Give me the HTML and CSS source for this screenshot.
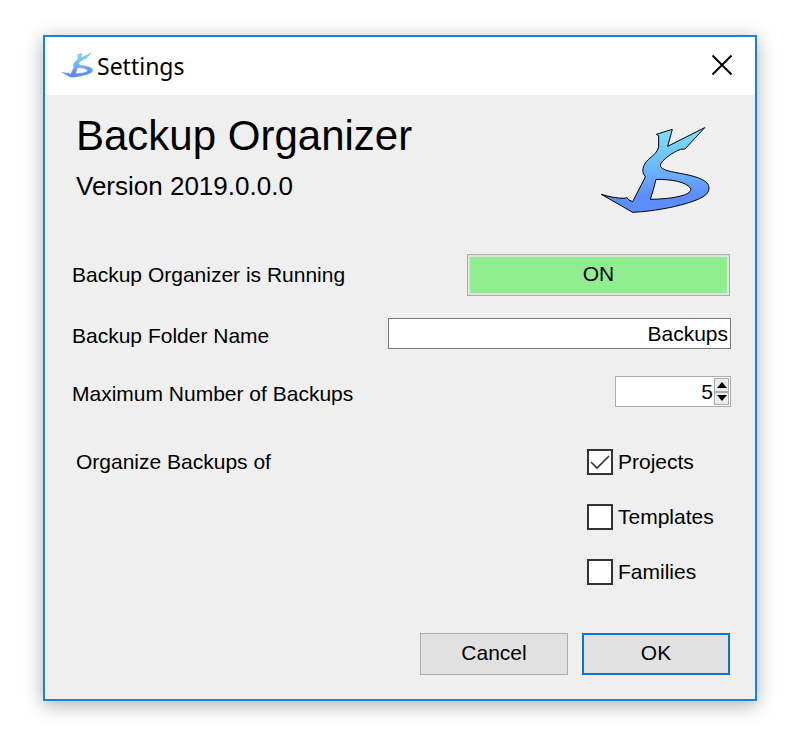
FILE: index.html
```html
<!DOCTYPE html>
<html lang="en">
<head>
<meta charset="utf-8">
<title>Settings</title>
<meta name="viewport" content="width=device-width, initial-scale=1">
<link rel="stylesheet" href="styles.css">
</head>
<body>
<svg class="defs" aria-hidden="true">
  <defs>
    <linearGradient id="logo-fill" x1="0" y1="0" x2="0" y2="1">
      <stop offset="0" stop-color="#7ce4fc"/>
      <stop offset="0.5" stop-color="#6bb4fb"/>
      <stop offset="0.8" stop-color="#5c8efb"/>
      <stop offset="1" stop-color="#5d8cff"/>
    </linearGradient>
    <symbol id="logo" viewBox="30 34 330 262">
      <path fill="url(#logo-fill)" fill-rule="evenodd" stroke-linejoin="round" d="M34 238 L128 292 C190 289 250 277 290 265 C332 252 357 240 357 220 C357 195 320 184 265 174 C235 169 211 163 211 150 C214 136 250 110 272 103 L285 102 L344 38 L233 94 L247 43 L199 58 L206 62 L206 96 C203 110 190 122 180 129 C165 142 157 155 159 172 C160 180 166 181 166 186 L128 260 L117 255 L110 247 L105 250 C80 250 55 245 34 238 Z M198 193 C193 213 188 234 181 253 C240 252 303 243 303 222 C290 200 245 193 198 193 Z"/>
    </symbol>
  </defs>
</svg>
<form class="dialog" role="dialog" aria-labelledby="dialog-title">
  <header class="titlebar">
    <svg class="app-icon" aria-hidden="true"><use href="#logo"/></svg>
    <span class="titlebar-text" id="dialog-title">Settings</span>
    <button class="close" type="button" aria-label="Close">
      <svg viewBox="0 0 20 20" aria-hidden="true"><path d="M0.5 0.5 L19.5 19.5 M19.5 0.5 L0.5 19.5"/></svg>
    </button>
  </header>
  <main class="content">
    <section class="about">
      <div class="about-text">
        <h1>Backup Organizer</h1>
        <p>Version 2019.0.0.0</p>
      </div>
      <svg class="logo" aria-hidden="true"><use href="#logo"/></svg>
    </section>
    <div class="row">
      <label for="running">Backup Organizer is Running</label>
      <button class="button toggle" id="running" type="button">ON</button>
    </div>
    <div class="row row-field row-folder">
      <label for="folder">Backup Folder Name</label>
      <input class="field" id="folder" type="text" value="Backups">
    </div>
    <div class="row row-field row-max">
      <label for="maximum">Maximum Number of Backups</label>
      <div class="spinner">
        <input id="maximum" type="text" inputmode="numeric" value="5">
        <div class="steps">
          <button type="button" aria-label="Increase"><svg viewBox="0 0 10 6" aria-hidden="true"><path d="M5 0 L10 6 H0 Z"/></svg></button>
          <button type="button" aria-label="Decrease"><svg viewBox="0 0 10 6" aria-hidden="true"><path d="M0 0 H10 L5 6 Z"/></svg></button>
        </div>
      </div>
    </div>
    <fieldset class="kinds">
      <legend>Organize Backups of</legend>
      <div class="choices">
        <label><input type="checkbox" checked>Projects</label>
        <label><input type="checkbox">Templates</label>
        <label><input type="checkbox">Families</label>
      </div>
    </fieldset>
    <footer class="actions">
      <button class="button" type="button">Cancel</button>
      <button class="button primary" type="submit">OK</button>
    </footer>
  </main>
</form>
</body>
</html>
```
FILE: styles.css
```css
* {
  box-sizing: border-box;
}

body {
  margin: 0;
  padding: 35px 47px 46px 43px;
  background: #fff;
  color: #000;
  font: 21px/26px "Liberation Sans", Arial, sans-serif;
}

button,
input {
  font: inherit;
  color: inherit;
}

.defs {
  position: absolute;
  width: 0;
  height: 0;
}

.dialog {
  border: 2px solid #1883d7;
  background: #efefef;
  box-shadow: 0 4px 18px rgba(0, 0, 0, 0.32);
}

.titlebar {
  display: flex;
  align-items: center;
  height: 58px;
  padding: 0 23px 2px 16px;
  background: #fff;
}

.app-icon {
  width: 32px;
  height: 26px;
  stroke: #7c9cc4;
  stroke-width: 4;
}

.titlebar-text {
  flex: 1;
  margin-left: 4px;
  padding-top: 2px;
  font: 23px/32px "Noto Sans", "Open Sans", sans-serif;
}

.close {
  display: flex;
  padding: 0;
  border: 0;
  background: none;
}

.close svg {
  width: 20px;
  height: 20px;
  overflow: visible;
  fill: none;
  stroke: #000;
  stroke-width: 2;
}

.content {
  padding: 16px 25px 24px 27px;
}

.about {
  display: flex;
  justify-content: space-between;
  padding: 0 20px 0 4px;
  margin-bottom: 40px;
}

h1 {
  margin: 0;
  font-size: 42px;
  font-weight: 400;
  line-height: 50px;
}

.about p {
  margin: 9px 0 0;
  font-size: 26px;
  line-height: 32px;
}

.logo {
  width: 110px;
  height: 88px;
  margin-top: 15px;
  stroke: #000;
  stroke-width: 3;
}

.row {
  display: flex;
  align-items: center;
  justify-content: space-between;
}

.row-field {
  align-items: flex-end;
  margin-right: -1px;
}

.row-folder {
  margin-top: 22px;
}

.row-max {
  margin-top: 27px;
}

.button {
  width: 148px;
  height: 42px;
  padding: 0 0 2px;
  border: 1px solid #adadad;
  border-radius: 0;
  background: #e1e1e1;
}

.toggle {
  width: 40%;
  background: #90ee90;
  box-shadow: inset 0 0 0 2px #e1e1e1;
}

.primary {
  border: 2px solid #0078d7;
}

.field {
  width: 52%;
  height: 31px;
  padding: 0 2px;
  border: 1px solid #7a7a7a;
  border-radius: 0;
  background: #fff;
  text-align: right;
}

.spinner {
  display: flex;
  width: 116px;
  height: 31px;
  padding: 1px;
  border: 1px solid #abadb3;
  background: #fff;
}

.spinner input {
  flex: 1;
  min-width: 0;
  padding: 0 1px;
  border: 0;
  background: none;
  text-align: right;
}

.steps {
  display: flex;
  flex-direction: column;
  width: 15px;
}

.steps button {
  display: flex;
  flex: 1;
  align-items: center;
  justify-content: center;
  padding: 0;
  border: 1px solid #acacac;
  background: #ebebeb;
}

.steps svg {
  width: 10px;
  height: 6px;
}

.kinds {
  display: flex;
  justify-content: space-between;
  min-width: 0;
  margin: 42px 0 0;
  padding: 0 0 0 4px;
  border: 0;
}

.kinds legend {
  float: left;
  padding: 0;
}

.choices {
  display: grid;
  gap: 29px;
  width: 143px;
}

.choices label {
  display: flex;
  align-items: center;
  gap: 5px;
}

.choices input {
  appearance: none;
  flex: none;
  width: 26px;
  height: 26px;
  margin: 0;
  border: 2px solid #333;
  background: #fff;
}

.choices input:checked {
  background: #fff url("data:image/svg+xml,%3Csvg xmlns='http://www.w3.org/2000/svg' viewBox='0 0 22 22'%3E%3Cpath d='M2 11 L8 17 L20 5' fill='none' stroke='%23333' stroke-width='1.6'/%3E%3C/svg%3E") center / 22px 22px no-repeat;
}

.actions {
  display: flex;
  justify-content: flex-end;
  gap: 14px;
  margin-top: 48px;
}
```
